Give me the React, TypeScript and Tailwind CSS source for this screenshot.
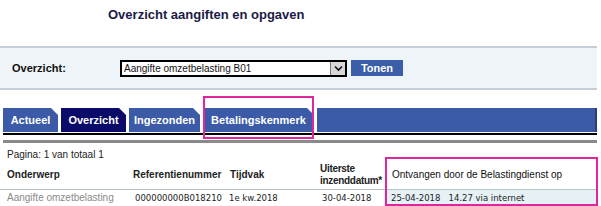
import React from 'react';

const tabs = [
  { label: 'Actueel', w: 'w-[55px]', active: false },
  { label: 'Overzicht', w: 'w-[65px]', active: true },
  { label: 'Ingezonden', w: 'w-[71px]', active: false },
  { label: 'Betalingskenmerk', w: 'w-[111px]', active: false },
];

export default function App() {
  return (
    <div className="relative w-[601px] h-[206px] bg-white overflow-hidden font-['Liberation_Sans',Arial,sans-serif]">
      <div className="h-[46px] pl-[108px] pt-[7px]">
        <h1 className="text-[13px] font-bold text-[#1b1b45] leading-[16px]">Overzicht aangiften en opgaven</h1>
      </div>

      <div className="mr-[4px] h-[44px] bg-[#eef4f7] border-t-2 border-b-2 border-[#c5ced8] flex items-center">
        <span className="w-[120px] pl-[12px] text-[11px] font-bold text-[#111]">Overzicht:</span>
        <div className="flex items-center w-[227px] h-[17px] border-2 border-black bg-white">
          <span className="flex-1 pl-[2px] text-[10px] leading-[13px] text-[#111]">Aangifte omzetbelasting B01</span>
          <span className="w-[15px] h-full bg-[#d8d8d8] border-l border-[#777] flex items-center justify-center">
            <svg width="9" height="7" viewBox="0 0 9 7"><path d="M1 1.5 L4.5 5 L8 1.5" fill="none" stroke="#111" strokeWidth="1.6" /></svg>
          </span>
        </div>
        <button className="ml-[4px] w-[52px] h-[16px] bg-[#3b5ea8] text-white text-[11px] font-bold leading-[16px]">Tonen</button>
      </div>

      <div className="mt-[18px] ml-[3px] mr-[4px] h-[24px] flex gap-[3px] bg-white">
        {tabs.map(t => (
          <div
            key={t.label}
            className={`${t.w} h-full flex items-center justify-center text-[11px] font-bold text-white [clip-path:polygon(0_0,calc(100%-7px)_0,100%_7px,100%_100%,0_100%)] ${t.active ? 'bg-[#0b0b6a]' : 'bg-[#3b5ba8]'}`}
          >
            {t.label}
          </div>
        ))}
        <div className="flex-1 h-full bg-[#3b5ba8] border-r-2 border-[#2a3f78]" />
      </div>
      <div className="ml-[3px] mr-[4px] h-[2px] bg-black mt-[1px]" />
      <div className="ml-[3px] mr-[4px] h-[3px] bg-[#8a8a8a] mt-[5px]" />

      <div className="pl-[7px] mt-[5px] text-[10px] leading-[13px] text-[#222]">Pagina: 1 van totaal 1</div>

      <div className="flex items-center h-[29px] mr-[4px] text-[10px] font-bold text-[#222] leading-[12px] border-b border-[#b8c4cc]">
        <span className="w-[133px] pl-[7px]">Onderwerp</span>
        <span className="w-[97px]">Referentienummer</span>
        <span className="w-[90px]">Tijdvak</span>
        <span className="w-[72px] tracking-[-0.3px]">Uiterste<br />inzenddatum*</span>
        <span className="flex-1 font-normal text-[#111]">Ontvangen door de Belastingdienst op</span>
      </div>
      <div className="flex items-center h-[17px] mr-[4px] text-[8.5px] leading-[12px] text-[#222] border-b border-[#b8c4cc] font-['DejaVu_Sans',Verdana,sans-serif]">
        <span className="w-[133px] pl-[7px] text-[#8a8a8a] font-['Liberation_Sans',Arial,sans-serif] text-[10px]">Aangifte omzetbelasting</span>
        <span className="w-[97px] pl-[2px]">000000000B018210</span>
        <span className="w-[90px] -ml-[1px]">1e kw.2018</span>
        <span className="w-[65px] pl-[3px]">30-04-2018</span>
        <span className="flex-1 h-full flex items-center pl-[7px] bg-[#e6f1f6] whitespace-pre">25-04-2018   14.27 via internet</span>
      </div>

      <div className="absolute left-[203px] top-[96px] w-[111px] h-[43px] border-2 border-[#e0259f]" />
      <div className="absolute left-[385px] top-[157px] w-[213px] h-[49px] border-2 border-[#e0259f]" />
    </div>
  );
}
